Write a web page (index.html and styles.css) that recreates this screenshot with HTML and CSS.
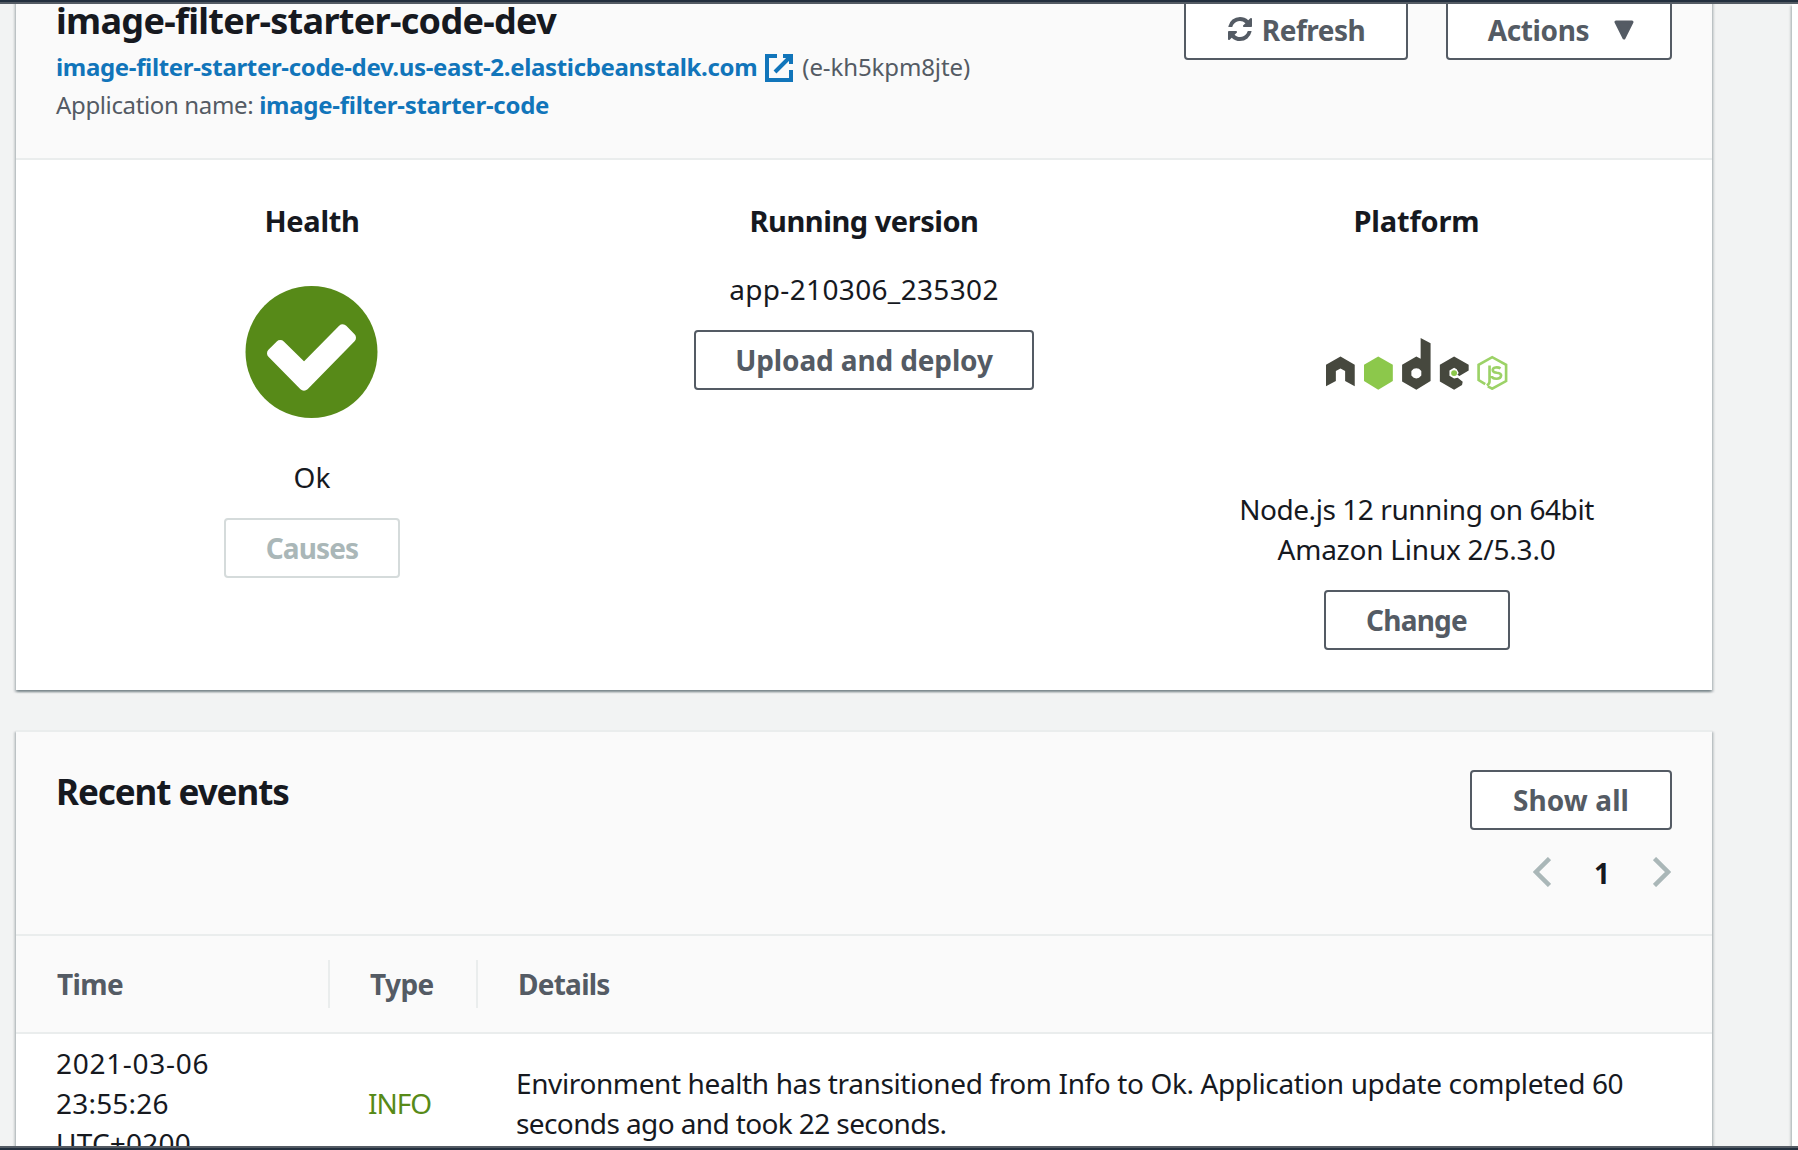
FILE: index.html
```html
<!DOCTYPE html>
<html lang="en">
<head>
<meta charset="utf-8">
<title>image-filter-starter-code-dev</title>
<link rel="stylesheet" href="styles.css">
</head>
<body>
<div class="edge edge-top"></div>
<div class="workspace">
  <main class="content">
    <section class="panel overview">
      <header class="panel-header env-header">
        <div class="env-info">
          <h1 class="title env-title"><span class="t-title">image-filter-starter-code-dev</span></h1>
          <p class="sub"><a class="link t-url">image-filter-starter-code-dev.us-east-2.elasticbeanstalk.com</a><svg class="external" viewBox="0 0 16 16"><path d="M10 2h4v4M6 10l8-8M14 9.048V14H2V2h5"/></svg><span class="t-id">(e-kh5kpm8jte)</span></p>
          <p class="sub"><span class="t-app">Application name: </span><a class="link t-appname">image-filter-starter-code</a></p>
        </div>
        <div class="actions">
          <button class="btn btn-refresh"><svg class="refresh" viewBox="0 0 1536 1536"><path d="M1511 928q0 5-1 7-64 268-268 434.500t-478 166.500q-146 0-282.500-55t-243.500-157l-129 129q-19 19-45 19t-45-19-19-45v-448q0-26 19-45t45-19h448q26 0 45 19t19 45-19 45l-137 137q71 66 161 102t187 36q134 0 250-65t186-179q11-17 53-117 8-23 30-23h192q13 0 22.500 9.500t9.500 22.500zm25-800v448q0 26-19 45t-45 19h-448q-26 0-45-19t-19-45 19-45l138-138q-148-137-349-137-134 0-250 65t-186 179q-11 17-53 117-8 23-30 23h-199q-13 0-22.500-9.500t-9.500-22.500v-7q65-268 270-434.500t480-166.500q146 0 284 55.500t245 156.500l130-129q19-19 45-19t45 19 19 45z"/></svg><span class="t-refresh">Refresh</span></button>
          <button class="btn btn-actions"><span class="t-actions">Actions</span><svg class="caret" viewBox="0 0 20 20"><path d="M2 2h16l-8 16z"/></svg></button>
        </div>
      </header>
      <div class="columns">
        <div class="column">
          <h2 class="label t-health">Health</h2>
          <svg class="status" viewBox="0 0 132 132"><circle cx="65.500" cy="66" r="66"/><path d="M34.300 59L26 67.300L58 99.700L105 51.700L96.700 43.300L58 82.400Z"/></svg>
          <p class="text">Ok</p>
          <button class="btn btn-causes" disabled><span class="t-causes">Causes</span></button>
        </div>
        <div class="column">
          <h2 class="label t-running">Running version</h2>
          <p class="text version t-version">app-210306_235302</p>
          <button class="btn btn-upload"><span class="t-upload">Upload and deploy</span></button>
        </div>
        <div class="column column-platform">
          <h2 class="label t-platform">Platform</h2>
          <svg class="node-logo" viewBox="48 38 546 157">
            <g class="node-dark">
              <path d="M46 119L90 94L133 119V184L104 168V138L90 130L76 138V168L46 184Z"/>
              <path fill-rule="evenodd" d="M276 119L319 94L332 101V38L362 54V168L319 194L276 169ZM319 129L311 131L304 138V151L311 158L319 160L327 158L334 151V138L327 131Z"/>
              <path d="M390 119L433 94L477 119V136L449 153L443 149L447 144L441 132L433 128L419 136V152L433 160L444 158L459 170L457 180L433 194L390 169Z"/>
            </g>
            <path class="node-green" d="M161 119L204 94L248 119V168L204 194L161 168Z"/>
            <circle class="node-green" cx="433" cy="144" r="9"/>
            <g class="node-line">
              <path d="M527 177L507 165V119L548 96L590 119V168L548 191L535 184"/>
              <path d="M540 121V169Q540 176 532 181M573 130Q568 126 558 127Q548 129 550 137Q552 142 562 143Q575 144 575 151Q574 161 561 161Q547 161 547 153"/>
            </g>
          </svg>
          <p class="text platform-text"><span class="t-plat1">Node.js 12 running on 64bit</span><br><span class="t-plat2">Amazon Linux 2/5.3.0</span></p>
          <button class="btn btn-change"><span class="t-change">Change</span></button>
        </div>
      </div>
    </section>
    <section class="panel events">
      <header class="panel-header events-header">
        <h2 class="title events-title"><span class="t-events">Recent events</span></h2>
        <div class="events-tools">
          <button class="btn btn-show"><span class="t-show">Show all</span></button>
          <nav class="pager">
            <svg class="chevron" viewBox="0 0 18 30"><path d="M16.500 1.500L3 15L16.500 28.500"/></svg>
            <span class="page">1</span>
            <svg class="chevron" viewBox="0 0 18 30"><path d="M1.500 1.500L15 15L1.500 28.500"/></svg>
          </nav>
        </div>
      </header>
      <div class="row row-head">
        <div class="head-cell"><span class="t-time">Time</span></div>
        <div class="head-cell"><span class="t-type">Type</span></div>
        <div class="head-cell"><span class="t-details">Details</span></div>
      </div>
      <div class="row row-body">
        <div class="cell"><span class="t-date">2021-03-06</span><br><span class="t-clock">23:55:26</span><br><span class="t-clock">UTC+0200</span></div>
        <div class="cell info"><span class="t-info">INFO</span></div>
        <div class="cell"><span class="t-det1">Environment health has transitioned from Info to Ok. Application update completed 60</span><br><span class="t-det2">seconds ago and took 22 seconds.</span></div>
      </div>
    </section>
  </main>
  <aside class="side"></aside>
</div>
<div class="edge edge-bottom"></div>
</body>
</html>
```
FILE: styles.css
```css
* { box-sizing: border-box; }
body {
  margin: 0;
  width: 1798px;
  height: 1150px;
  overflow: hidden;
  display: flex;
  flex-direction: column;
  background: #f2f3f3;
  color: #16191f;
  font: 28px/40px "Noto Sans", "Open Sans", sans-serif;
}
h1, h2, p { margin: 0; }
.edge { height: 4px; flex: none; background: #232f3e; }
.edge-top { border-bottom: 2px solid #545b64; }
.edge-bottom { border-top: 2px solid #545b64; }
.workspace {
  height: 1142px;
  display: flex;
  justify-content: space-between;
  overflow: hidden;
}
.content { width: 1696px; margin: -44px 0 0 16px; flex: none; }
.side, .panel {
  background: #fff;
  box-shadow: 0 2px 2px rgba(0, 28, 36, .3), 2px 2px 2px rgba(0, 28, 36, .15), -2px 2px 2px rgba(0, 28, 36, .15);
}
.side { width: 6px; }
.panel-header {
  display: flex;
  justify-content: space-between;
  padding: 40px 40px 0;
  background: #fafafa;
  border-bottom: 2px solid #eaeded;
}
.env-header { height: 200px; }
.title { font-size: 36px; line-height: 44px; font-weight: 700; white-space: nowrap; }
.env-title { margin: -1px 0 5px; }
.events-title { font-size: 35px; line-height: 43px; }
.sub {
  font-size: 24px;
  line-height: 38px;
  height: 38px;
  color: #545b64;
  white-space: nowrap;
}
.t-app { white-space: pre; }
.link { color: #1175ba; font-weight: 700; }
.external {
  width: 32px;
  height: 32px;
  margin: 0 7px 0 6px;
  vertical-align: -8px;
  fill: none;
  stroke: #1175ba;
  stroke-width: 2;
}
.actions { display: flex; gap: 38px; }
.btn {
  display: flex;
  align-items: center;
  justify-content: center;
  height: 60px;
  flex: none;
  padding: 0 0 1px;
  border: 2px solid #545b64;
  border-radius: 4px;
  background: #fff;
  color: #545b64;
  font: 700 28px/40px "Noto Sans", "Open Sans", sans-serif;
  white-space: nowrap;
}
.btn:disabled { border-color: #d5dbdb; color: #aab7b8; }
.btn-refresh { width: 224px; gap: 10px; padding-left: 1px; }
.btn-actions { width: 226px; gap: 25px; padding-left: 4px; }
.btn-causes { width: 176px; }
.btn-upload { width: 340px; }
.btn-change { width: 186px; }
.btn-show { width: 202px; }
.refresh { width: 24px; height: 24px; margin-top: -1px; fill: currentColor; }
.caret {
  width: 20px;
  height: 20px;
  fill: currentColor;
  stroke: currentColor;
  stroke-width: 3;
  stroke-linejoin: round;
}
.columns {
  display: grid;
  grid-template-columns: repeat(3, 512px);
  gap: 40px;
  padding: 40px;
  height: 530px;
}
.column { display: flex; flex-direction: column; align-items: center; text-align: center; }
.column-platform { padding-left: 1px; }
.label { font-size: 29px; line-height: 42px; height: 44px; font-weight: 700; white-space: nowrap; }
.text { white-space: nowrap; }
.status { width: 132px; height: 132px; margin: 42px 0 39px; fill: #578a18; flex: none; overflow: visible; }
.status path { fill: #fff; stroke: #fff; stroke-width: 10; stroke-linejoin: round; }
.btn-causes { margin-top: 21px; }
.version { margin: 25px 0 21px; }
.node-logo { width: 182px; height: 52px; margin: 94px 0 99px; flex: none; filter: blur(.7px); }
.node-dark { fill: #46483e; }
.node-green { fill: #8cc84b; }
.node-line { fill: none; stroke: #9cd267; stroke-width: 8; }
.platform-text { margin-bottom: 21px; }
.events { margin-top: 40px; border-top: 2px solid #eaeded; }
.events-header { height: 204px; padding-top: 38px; }
.events-tools { display: flex; flex-direction: column; align-items: flex-end; gap: 27px; }
.pager { display: flex; align-items: center; height: 30px; gap: 41px; padding-right: 1px; }
.page { font-weight: 700; width: 20px; padding-top: 2px; text-align: center; }
.chevron { width: 18px; height: 30px; fill: none; stroke: #aab7b8; stroke-width: 4.5; }
.row { display: grid; grid-template-columns: 314px 148px 1fr; white-space: nowrap; }
.row-head {
  padding: 24px 0;
  height: 98px;
  border-bottom: 2px solid #eaeded;
  background: #fafafa;
  color: #545b64;
  font-weight: 700;
}
.head-cell { height: 48px; padding: 4px 0 0 40px; line-height: 40px; border-right: 2px solid #eaeded; }
.head-cell:first-child { padding-left: 41px; }
.head-cell:last-child { border-right: 0; }
.row-body { align-items: center; padding: 9px 0; }
.cell { padding-left: 40px; }
.cell.info { padding-left: 38px; }
.row-body .cell:last-child { padding-left: 38px; }
.info { color: #578a18; }

/* Tracking per label */
.t-title { letter-spacing: -.7px; }
.t-url { letter-spacing: -.33px; }
.t-id { letter-spacing: -.1px; }
.t-app { letter-spacing: -.36px; }
.t-appname { letter-spacing: -.26px; }
.t-refresh { letter-spacing: -.5px; }
.t-actions { letter-spacing: -.4px; }
.t-health { letter-spacing: -.3px; }
.t-running { letter-spacing: -.47px; }
.t-platform { letter-spacing: -.15px; }
.t-version { letter-spacing: .34px; }
.t-upload { letter-spacing: -.13px; }
.t-causes { letter-spacing: -.9px; }
.t-change { letter-spacing: -.75px; }
.t-show { letter-spacing: .1px; }
.t-plat1 { letter-spacing: -.44px; }
.t-plat2 { letter-spacing: -.23px; }
.t-events { letter-spacing: -1.05px; }
.t-time { letter-spacing: -.6px; }
.t-type { letter-spacing: -.6px; }
.t-details { letter-spacing: -.75px; }
.t-date { letter-spacing: .7px; }
.t-clock { letter-spacing: .2px; }
.t-info { letter-spacing: -1px; }
.t-det1 { letter-spacing: -.385px; }
.t-det2 { letter-spacing: -.61px; }
```
